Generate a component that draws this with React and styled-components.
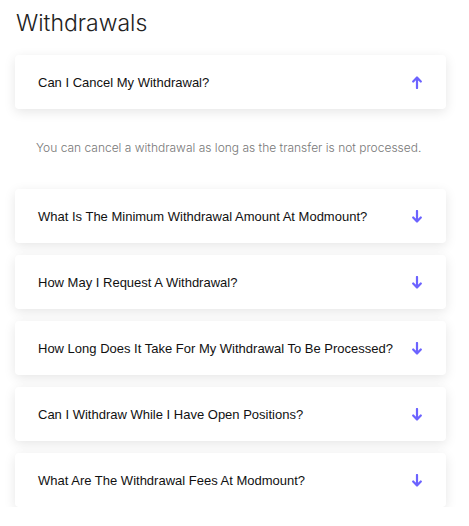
import styled, { createGlobalStyle } from "styled-components";

const GlobalStyle = createGlobalStyle`
  body {
    margin: 0;
    background: #fff;
    font-family: "Liberation Sans", Arial, sans-serif;
  }
`;

const Page = styled.div`
  padding: 7px 23px 0 15px;
`;

const Title = styled.h1`
  margin: 0 0 16px 1px;
  font-family: Inter, "Noto Sans", sans-serif;
  font-weight: 300;
  font-size: 23px;
  line-height: 32px;
  color: #222;
`;

const List = styled.div`
  display: flex;
  flex-direction: column;
  gap: 12px;
`;

const Item = styled.div`
  display: flex;
  flex-direction: column;
`;

const Card = styled.div`
  display: flex;
  align-items: center;
  justify-content: space-between;
  height: 54px;
  padding: 0 24px 0 23px;
  background: #fff;
  border-radius: 4px;
  box-shadow: 0 3px 12px rgba(0, 0, 0, 0.1);
  cursor: pointer;
`;

const Question = styled.span`
  font-size: 13px;
  color: #111;
`;

const Answer = styled.p`
  margin: 0;
  padding: 30px 0 20px 21px;
  font-family: Inter, "Noto Sans", sans-serif;
  font-weight: 300;
  font-size: 12px;
  line-height: 18px;
  color: #777;
`;

const Arrow = ({ up }) => (
  <svg width="10" height="13" viewBox="0 0 10 13" style={{ transform: up ? "none" : "rotate(180deg)" }}>
    <path d="M5 12V2M1.2 5.5L5 1.5l3.8 4" fill="none" stroke="#6c63ff" strokeWidth="2.2" strokeLinecap="round" strokeLinejoin="round" />
  </svg>
);

const faqs = [
  { q: "Can I Cancel My Withdrawal?", a: "You can cancel a withdrawal as long as the transfer is not processed.", open: true },
  { q: "What Is The Minimum Withdrawal Amount At Modmount?" },
  { q: "How May I Request A Withdrawal?" },
  { q: "How Long Does It Take For My Withdrawal To Be Processed?" },
  { q: "Can I Withdraw While I Have Open Positions?" },
  { q: "What Are The Withdrawal Fees At Modmount?" },
];

const App = () => {
  return (
    <Page>
      <GlobalStyle />
      <Title>Withdrawals</Title>
      <List>
        {faqs.map((f) => (
          <Item key={f.q}>
            <Card>
              <Question>{f.q}</Question>
              <Arrow up={f.open} />
            </Card>
            {f.open && <Answer>{f.a}</Answer>}
          </Item>
        ))}
      </List>
    </Page>
  );
};

export default App;
